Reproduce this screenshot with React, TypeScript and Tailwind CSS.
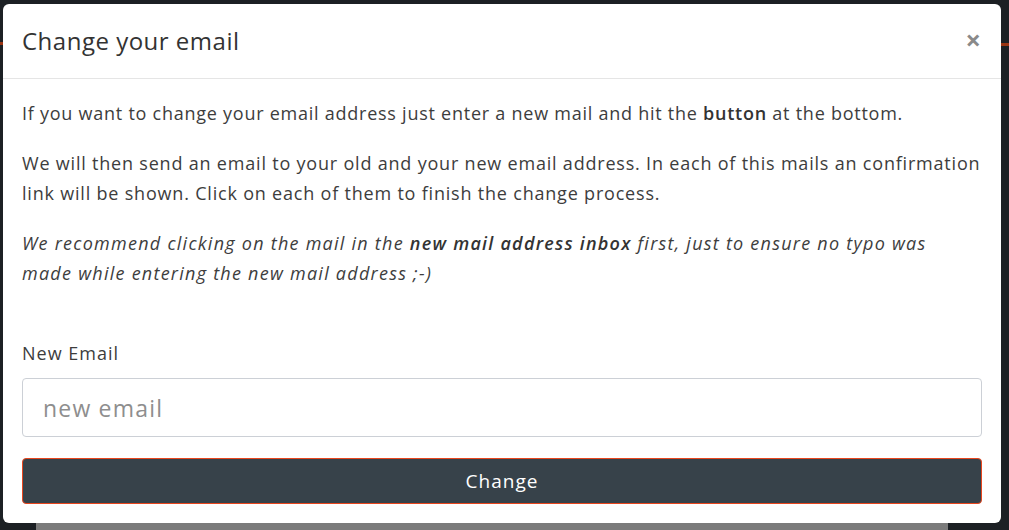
import React from "react";

export default function App() {
  return (
    <div className="relative h-[530px] w-[1009px] overflow-hidden bg-[#1c2024] font-['Open_Sans',sans-serif] text-[#3d3d3d]">
      {/* page behind the overlay */}
      <div className="absolute right-0 top-[43px] h-[3px] w-[10px] bg-[#9a3412]" />
      <div className="absolute left-0 top-[42px] h-[3px] w-[4px] bg-[#9a3412]" />
      <div className="absolute bottom-0 left-[36px] h-[7px] w-[912px] bg-[#7b7b7b]" />

      <div className="absolute left-[3px] top-[4px] flex w-[998px] flex-col rounded-md bg-white">
        <header className="flex h-[75px] items-center justify-between border-b border-[#e5e5e5] px-[19px]">
          <h4 className="text-[24px] font-normal tracking-[0.5px] text-[#333]">Change your email</h4>
          <button className="mb-[4px] mr-[1px] text-[27px] font-bold leading-none text-[#8a8a8a]">×</button>
        </header>

        <div className="flex flex-col px-[19px] pb-[19px] pt-[19px] text-[18px] leading-[30px] tracking-[0.75px]">
          <p className="mb-[20px] whitespace-nowrap">
            If you want to change your email address just enter a new mail and hit the{" "}
            <b className="font-semibold text-[#333]">button</b> at the bottom.
          </p>
          <p className="mb-[20px] whitespace-nowrap tracking-[0.8px]">
            We will then send an email to your old and your new email address. In each of this mails an confirmation
            <br />
            link will be shown. Click on each of them to finish the change process.
          </p>
          <p className="mb-[50px] whitespace-nowrap italic tracking-[1.25px]">
            We recommend clicking on the mail in the <b className="font-semibold text-[#333]">new mail address inbox</b> first, just to ensure no typo was
            <br />
            made while entering the new mail address ;-)
          </p>

          <label className="mb-[10px] tracking-[1px]">New Email</label>
          <input
            placeholder="new email"
            className="h-[59px] rounded-[4px] border border-[#ccd0d6] px-[20px] text-[23px] tracking-[1.2px] outline-none placeholder:text-[#8e8e8e]"
          />
          <button className="mt-[21px] h-[46px] rounded-[4px] border border-[#e8461e] bg-[#37424a] text-[19px] tracking-[1px] text-white">
            Change
          </button>
        </div>
      </div>
    </div>
  );
}
